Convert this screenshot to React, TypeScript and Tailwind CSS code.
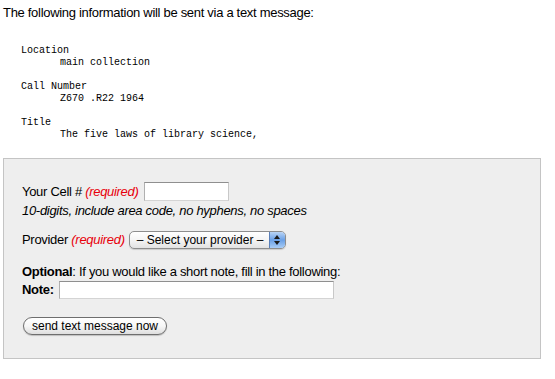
import { useState } from 'react'

const items = [
  { label: 'Location', value: 'main collection' },
  { label: 'Call Number', value: 'Z670 .R22 1964' },
  { label: 'Title', value: 'The five laws of library science,' },
]

const App = () => {
  const [cell, setCell] = useState('')
  const [note, setNote] = useState('')

  return (
    <div className="min-h-[379px] bg-white pt-[5px] text-[13px] leading-4 tracking-[-0.3px] text-black [font-family:'Liberation_Sans',Arial,sans-serif]">
      <p className="pl-[3px]">The following information will be sent via a text message:</p>

      <div className="mt-[24px] pl-[21px] text-[10px] leading-3 tracking-normal [font-family:'Liberation_Mono','Courier_New',monospace]">
        {items.map((item, i) => (
          <div key={item.label} className={i > 0 ? 'mt-3' : ''}>
            <div>{item.label}</div>
            <div className="pl-[39px]">{item.value}</div>
          </div>
        ))}
      </div>

      <form
        className="mx-[3px] mt-[17px] w-[538px] border border-[#c4c4c4] bg-[#eeeeee] pb-[23px] pl-[18px] pt-[23px]"
        onSubmit={e => e.preventDefault()}
      >
        <div className="flex h-[19px] items-center">
          <label htmlFor="cell" className="whitespace-nowrap">
            Your Cell # <em className="text-[#e8000c]">(required)</em>
          </label>
          <input
            id="cell"
            value={cell}
            onChange={e => setCell(e.target.value)}
            className="ml-[5px] h-[19px] w-[85px] border border-t-[#8f8f8f] border-r-[#c8c8c8] border-b-[#d4d4d4] border-l-[#b0b0b0] bg-white px-1 outline-none"
          />
        </div>
        <p className="mt-[2px] italic">10-digits, include area code, no hyphens, no spaces</p>

        <div className="mt-[12px] flex h-[18px] items-center">
          <span className="whitespace-nowrap">
            Provider <em className="text-[#e8000c]">(required)</em>
          </span>
          <div className="ml-[4px] flex h-[18px] w-[157px] overflow-hidden rounded-[5px] border border-[#8d8d8d] bg-gradient-to-b from-white via-[#f4f4f4] to-[#e2e2e2] shadow-[0_1px_1px_rgba(0,0,0,0.15)]">
            <span className="flex flex-1 items-center whitespace-nowrap pl-[7px] text-[12px] tracking-normal">
              – Select your provider –
            </span>
            <span className="flex w-[16px] flex-col items-center justify-center gap-[2px] border-l border-[#5a7fb8] bg-gradient-to-b from-[#b9d4f5] via-[#6aa0e6] to-[#a9cdf6]">
              <svg width="6" height="4" viewBox="0 0 6 4"><path d="M3 0L6 4H0Z" fill="#1a1a1a" /></svg>
              <svg width="6" height="4" viewBox="0 0 6 4"><path d="M0 0H6L3 4Z" fill="#1a1a1a" /></svg>
            </span>
          </div>
        </div>

        <p className="mt-[15px] whitespace-nowrap">
          <b>Optional</b>: If you would like a short note, fill in the following:
        </p>
        <div className="mt-[1px] flex h-[18px] items-center">
          <label htmlFor="note" className="font-bold">Note:</label>
          <input
            id="note"
            value={note}
            onChange={e => setNote(e.target.value)}
            className="ml-[5px] h-[18px] w-[275px] border border-t-[#8f8f8f] border-r-[#c8c8c8] border-b-[#d4d4d4] border-l-[#b0b0b0] bg-white px-1 outline-none"
          />
        </div>

        <button
          type="submit"
          className="mt-[18px] ml-[1px] flex h-[18px] w-[144px] items-center justify-center whitespace-nowrap rounded-full border border-[#6e6e6e] bg-gradient-to-b from-white via-[#f7f7f7] to-[#dedede] text-[12px] tracking-normal shadow-[0_1px_1px_rgba(0,0,0,0.2)]"
        >
          send text message now
        </button>
      </form>
    </div>
  )
}

export default App
